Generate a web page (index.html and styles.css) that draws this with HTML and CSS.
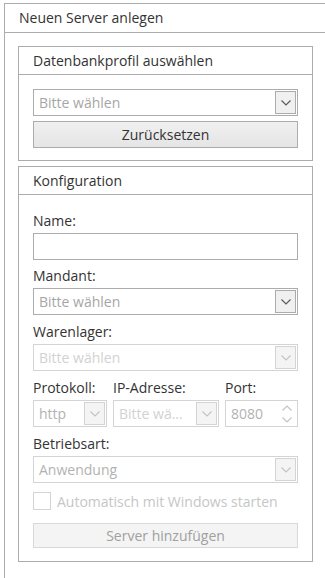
FILE: index.html
```html
<!DOCTYPE html>
<html lang="de">
<head>
    <meta charset="UTF-8">
    <meta name="viewport" content="width=device-width, initial-scale=1.0">
    <title>Neuen Server anlegen</title>
    <link rel="stylesheet" href="styles.css">
</head>
<body>
    <div class="panel">
        <div class="panel-title">Neuen Server anlegen</div>

        <div class="group">
            <div class="group-title">Datenbankprofil auswählen</div>
            <div class="group-body">
                <div class="combo">
                    <span class="combo-text placeholder">Bitte wählen</span>
                    <span class="combo-btn"><svg width="10" height="6" viewBox="0 0 10 6"><polyline points="0.5,0.5 5,5 9.5,0.5" fill="none" stroke="#5a5a5a" stroke-width="1.2"/></svg></span>
                </div>
                <div class="btn">Zurücksetzen</div>
            </div>
        </div>

        <div class="group">
            <div class="group-title">Konfiguration</div>
            <div class="group-body form">
                <div class="label">Name:</div>
                <div class="textbox"></div>

                <div class="label">Mandant:</div>
                <div class="combo">
                    <span class="combo-text placeholder">Bitte wählen</span>
                    <span class="combo-btn"><svg width="10" height="6" viewBox="0 0 10 6"><polyline points="0.5,0.5 5,5 9.5,0.5" fill="none" stroke="#5a5a5a" stroke-width="1.2"/></svg></span>
                </div>

                <div class="label tall">Warenlager:</div>
                <div class="combo disabled">
                    <span class="combo-text faint">Bitte wählen</span>
                    <span class="combo-btn"><svg width="10" height="6" viewBox="0 0 10 6"><polyline points="0.5,0.5 5,5 9.5,0.5" fill="none" stroke="#c4c4c4" stroke-width="1.2"/></svg></span>
                </div>

                <div class="row3">
                    <div class="col proto">
                        <div class="label">Protokoll:</div>
                        <div class="combo disabled">
                            <span class="combo-text dim">http</span>
                            <span class="combo-btn"><svg width="10" height="6" viewBox="0 0 10 6"><polyline points="0.5,0.5 5,5 9.5,0.5" fill="none" stroke="#c4c4c4" stroke-width="1.2"/></svg></span>
                        </div>
                    </div>
                    <div class="col ip">
                        <div class="label">IP-Adresse:</div>
                        <div class="combo disabled">
                            <span class="combo-text faint">Bitte wä...</span>
                            <span class="combo-btn"><svg width="10" height="6" viewBox="0 0 10 6"><polyline points="0.5,0.5 5,5 9.5,0.5" fill="none" stroke="#c4c4c4" stroke-width="1.2"/></svg></span>
                        </div>
                    </div>
                    <div class="col port">
                        <div class="label">Port:</div>
                        <div class="combo disabled">
                            <span class="combo-text dim">8080</span>
                            <span class="spin">
                                <svg width="10" height="6" viewBox="0 0 10 6"><polyline points="0.5,5.5 5,1 9.5,5.5" fill="none" stroke="#c4c4c4" stroke-width="1.2"/></svg>
                                <svg width="10" height="6" viewBox="0 0 10 6"><polyline points="0.5,0.5 5,5 9.5,0.5" fill="none" stroke="#c4c4c4" stroke-width="1.2"/></svg>
                            </span>
                        </div>
                    </div>
                </div>

                <div class="label tall">Betriebsart:</div>
                <div class="combo disabled">
                    <span class="combo-text dim">Anwendung</span>
                    <span class="combo-btn"><svg width="10" height="6" viewBox="0 0 10 6"><polyline points="0.5,0.5 5,5 9.5,0.5" fill="none" stroke="#c4c4c4" stroke-width="1.2"/></svg></span>
                </div>

                <div class="check">
                    <span class="check-box"></span>
                    <span class="check-text">Automatisch mit Windows starten</span>
                </div>

                <div class="btn disabled">Server hinzufügen</div>
            </div>
        </div>
    </div>
</body>
</html>
```

FILE: styles.css
```css
body {
    margin: 0;
    padding: 0;
    background: #ffffff;
    font-family: "Open Sans", "Noto Sans", sans-serif;
    font-size: 14px;
    color: #333333;
    overflow: hidden;
}
.panel {
    margin: 3px 0 0 4px;
    border: 1px solid #acacac;
    border-right: none;
    height: 620px;
}
.panel-title {
    height: 28px;
    line-height: 28px;
    padding-left: 14px;
    border-bottom: 1px solid #acacac;
}
.group {
    margin: 13px 0 0 13px;
    width: 293px;
    border: 1px solid #acacac;
}
.group + .group { margin-top: 5px; }
.group-title {
    height: 27px;
    line-height: 27px;
    padding-left: 14px;
    border-bottom: 1px solid #acacac;
}
.group-body {
    padding: 14px 14px 12px 14px;
}
.group-body.form { padding-top: 10px; padding-bottom: 13px; }
.combo, .textbox {
    box-sizing: border-box;
    height: 27px;
    border: 1px solid #acacac;
    display: flex;
    align-items: center;
    background: #fff;
}
.combo.disabled { border-color: #d4d4d4; }
.combo-text {
    flex: 1;
    padding-left: 5px;
    white-space: nowrap;
    overflow: hidden;
}
.placeholder { color: #a6a6a6; }
.faint { color: #d2d2d2; }
.dim { color: #b2b2b2; }
.combo-btn {
    box-sizing: border-box;
    width: 21px;
    height: 23px;
    margin-right: 1px;
    border: 1px solid #acacac;
    background: #f0f0f0;
    display: flex;
    align-items: center;
    justify-content: center;
}
.disabled .combo-btn { border-color: #d4d4d4; background: #f4f4f4; }
.spin {
    display: flex;
    flex-direction: column;
    gap: 6px;
    margin-right: 5px;
}
.btn {
    box-sizing: border-box;
    height: 27px;
    margin-top: 5px;
    border: 1px solid #acacac;
    background: linear-gradient(#f0f0f0, #e5e5e5);
    text-align: center;
    line-height: 25px;
}
.btn.disabled {
    height: 25px;
    line-height: 23px;
    margin-top: 0;
    border-color: #d9d9d9;
    background: #f4f4f4;
    color: #a0a0a0;
}
.label {
    height: 28px;
    box-sizing: border-box;
    padding-top: 6px;
    line-height: 20px;
}
.label.tall {
    height: 29px;
    padding-top: 7px;
}
.row3 {
    display: flex;
    gap: 6px;
    margin-top: 1px;
}
.col.proto { width: 74px; }
.col.ip { width: 106px; }
.col.port { flex: 1; }
.check {
    display: flex;
    align-items: center;
    gap: 6px;
    height: 18px;
    margin: 9px 0 13px 0;
    color: #c6c6c6;
}
.check-box {
    box-sizing: border-box;
    width: 18px;
    height: 18px;
    border: 1px solid #d4d4d4;
}
```
